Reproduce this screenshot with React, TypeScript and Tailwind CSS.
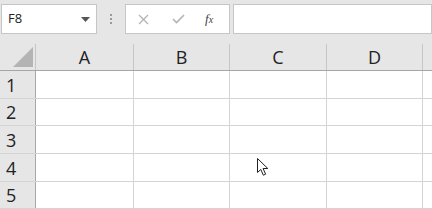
import React from "react";

const cols = [
  { label: "A", w: "w-[98px]" },
  { label: "B", w: "w-[96px]" },
  { label: "C", w: "w-[97px]" },
  { label: "D", w: "w-[96px]" },
];

const rows = [
  { n: 1, h: "h-[28px]" },
  { n: 2, h: "h-[27px]" },
  { n: 3, h: "h-[28px]" },
  { n: 4, h: "h-[28px]" },
  { n: 5, h: "h-[27px]" },
];

function Cursor() {
  return (
    <svg className="absolute left-[256px] top-[157px]" width="14" height="20" viewBox="0 0 14 20">
      <path
        d="M1.5 1.5 L1.5 15.5 L4.8 12.4 L7.3 18.2 L9.6 17.2 L7.1 11.5 L11.8 11.5 Z"
        fill="#fff"
        stroke="#222"
        strokeWidth="1"
        strokeLinejoin="round"
      />
    </svg>
  );
}

export default function App() {
  return (
    <div
      className="relative w-[432px] h-[209px] overflow-hidden bg-white text-[#222]"
      style={{ fontFamily: '"Open Sans", "Noto Sans", Arial, sans-serif' }}
    >
      {/* formula bar */}
      <div className="flex h-[44px] items-start bg-[#e6e6e6] pt-[4px]">
        <div className="ml-[1px] flex h-[30px] w-[96px] items-center justify-between border border-[#c6c6c6] bg-white pl-[6px] pr-[6px]">
          <span className="text-[13px]">F8</span>
          <svg width="9" height="5" viewBox="0 0 9 5">
            <path d="M0 0 H9 L4.5 5 Z" fill="#555" />
          </svg>
        </div>
        <div className="flex w-[28px] h-[30px] flex-col items-center justify-center gap-[2px]">
          <span className="h-[2px] w-[2px] bg-[#9a9a9a]" />
          <span className="h-[2px] w-[2px] bg-[#9a9a9a]" />
          <span className="h-[2px] w-[2px] bg-[#9a9a9a]" />
        </div>
        <div className="flex h-[30px] w-[105px] items-center border border-[#c6c6c6] bg-white">
          <svg className="ml-[12px]" width="11" height="11" viewBox="0 0 11 11">
            <path d="M1 1 L10 10 M10 1 L1 10" stroke="#b3b3b3" strokeWidth="1.3" />
          </svg>
          <svg className="ml-[23px]" width="13" height="10" viewBox="0 0 13 10">
            <path d="M1 5 L4.5 8.5 L12 1" stroke="#b3b3b3" strokeWidth="1.6" fill="none" />
          </svg>
          <span
            className="ml-[20px] text-[13px] italic text-[#444]"
            style={{ fontFamily: '"Liberation Serif", serif' }}
          >
            f<span className="text-[10px]">x</span>
          </span>
        </div>
        <div className="ml-[3px] h-[30px] flex-1 border border-[#c6c6c6] bg-white" />
      </div>

      {/* column headers */}
      <div className="flex h-[27px] bg-[#e6e6e6] border-b border-[#a6a6a6]">
        <div className="relative w-[36px] border-r border-[#c6c6c6]">
          <svg className="absolute left-[13px] top-[3px]" width="20" height="20" viewBox="0 0 20 20">
            <path d="M20 0 V20 H0 Z" fill="#b4b4b4" />
          </svg>
        </div>
        {cols.map((c) => (
          <div
            key={c.label}
            className={`${c.w} flex items-center justify-center border-r border-[#c6c6c6] text-[18px] leading-none`}
          >
            {c.label}
          </div>
        ))}
        <div className="flex-1" />
      </div>

      {/* rows */}
      {rows.map((r) => (
        <div key={r.n} className={`flex ${r.h} border-b border-[#d4d4d4]`}>
          <div className="flex w-[36px] items-center border-r border-[#a9a9a9] bg-[#e6e6e6] pl-[6px] text-[18px] leading-none">
            {r.n}
          </div>
          {cols.map((c) => (
            <div key={c.label} className={`${c.w} border-r border-[#d4d4d4]`} />
          ))}
          <div className="flex-1" />
        </div>
      ))}

      <Cursor />
    </div>
  );
}
